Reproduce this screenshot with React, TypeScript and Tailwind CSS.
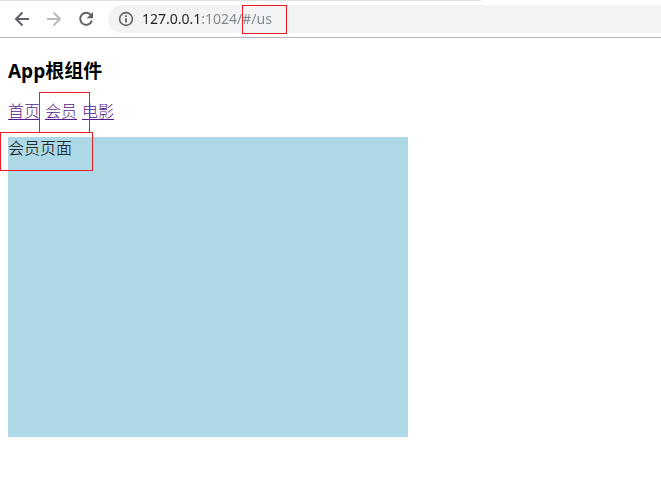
import { useState } from 'react';

const marker = 'pointer-events-none absolute z-10 border border-[#ed1c24]';

const links = [
  { label: '首页', href: '#/home' },
  { label: '会员', href: '#/us' },
  { label: '电影', href: '#/movie' },
];

function Toolbar() {
  const [address, setAddress] = useState('127.0.0.1:1024/#/us');
  return (
    <header className="border-b border-[#b4b4b6] bg-white">
      <div className="h-px w-[481px] max-w-full bg-[#dee1e6]" />
      <div className="flex items-center py-1 pl-3">
        <button type="button" aria-label="Back" className="mr-3 text-[#5f6368]">
          <svg width="20" height="20" viewBox="0 0 20 20" fill="none" stroke="currentColor" strokeWidth="2">
            <path d="M17 10H4M10.5 3.5L4 10l6.5 6.5" />
          </svg>
        </button>
        <button type="button" aria-label="Forward" className="mr-3 text-[#bababa]">
          <svg width="20" height="20" viewBox="0 0 20 20" fill="none" stroke="currentColor" strokeWidth="2">
            <path d="M3 10h13M9.5 3.5L16 10l-6.5 6.5" />
          </svg>
        </button>
        <button type="button" aria-label="Reload" className="mr-3 text-[#5f6368]">
          <svg width="20" height="20" viewBox="0 0 20 20" fill="none">
            <path d="M15 6.2A6 6 0 1 0 15.9 11.6" stroke="currentColor" strokeWidth="2" />
            <path d="M17 3v6.3h-6.3z" fill="currentColor" />
          </svg>
        </button>
        <div className="relative flex h-7 min-w-0 flex-1 items-center rounded-l-full bg-[#f1f3f4] pl-2.5">
          <svg width="16" height="16" viewBox="0 0 16 16" fill="none" stroke="#5f6368" className="mr-2 shrink-0">
            <circle cx="8" cy="8" r="6.4" strokeWidth="1.6" />
            <path d="M8 7.2v4.2M8 4.2v1.8" strokeWidth="1.8" />
          </svg>
          <input
            aria-label="Address"
            value={address}
            onChange={(e) => setAddress(e.target.value)}
            className="h-6 min-w-0 flex-1 bg-[linear-gradient(to_right,#202124_60px,#80868b_60px)] bg-clip-text pb-0.5 font-['Noto_Sans',sans-serif] text-sm font-normal text-transparent caret-black outline-none"
          />
          <span className={`${marker} left-[134px] top-0 h-[29px] w-[45px]`} />
        </div>
      </div>
    </header>
  );
}

export default function App() {
  return (
    <div className="bg-white font-['Open_Sans','Noto_Sans_CJK_SC',sans-serif] text-base text-black">
      <Toolbar />
      <main className="px-2 pt-[21px] font-light">
        <h3 className="text-[19px] leading-6 font-bold">App根组件</h3>
        <nav className="mt-[18px] flex gap-[5px] leading-5">
          {links.map((link) => (
            <a key={link.href} href={link.href} className="relative text-[#551a8b] underline underline-offset-2">
              {link.label}
              {link.href === '#/us' && <span className={`${marker} -top-[9px] -left-1.5 h-[41px] w-[51px]`} />}
            </a>
          ))}
        </nav>
        <section className="relative mt-4 h-[300px] max-w-[400px] bg-[#add8e6] leading-[22px]">
          会员页面
          <span className={`${marker} -top-[5px] -left-2 h-[39px] w-[93px]`} />
        </section>
      </main>
    </div>
  );
}
